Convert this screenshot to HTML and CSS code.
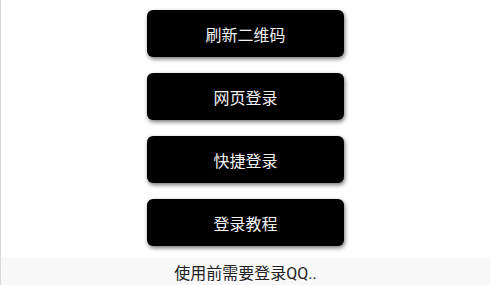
FILE: index.html
```html
<!DOCTYPE html>
<html lang="zh">

<head>
  <meta charset="UTF-8">
  <meta name="viewport" content="width=device-width, initial-scale=1.0">
  <title>QQ登录</title>
  <link rel="stylesheet" href="styles.css">
</head>

<body>
  <div class="menu">
    <div class="menu-button">刷新二维码</div>
    <div class="menu-button">网页登录</div>
    <div class="menu-button">快捷登录</div>
    <div class="menu-button">登录教程</div>
  </div>
  <div class="status-bar">使用前需要登录QQ..</div>
</body>

</html>
```

FILE: styles.css
```css
html,
body {
  margin: 0;
  height: 100%;
}

body {
  font-family: Roboto, "Noto Sans CJK SC", sans-serif;
  background-color: #ffffff;
  border-left: 1px solid #d8d8d8;
  box-sizing: border-box;
  display: flex;
  flex-direction: column;
  overflow: hidden;
}

.menu {
  height: 258px;
  display: flex;
  flex-direction: column;
  align-items: center;
  padding-top: 10px;
  gap: 16px;
  box-sizing: border-box;
}

.menu-button {
  width: 197px;
  height: 47px;
  flex-shrink: 0;
  background-color: #000;
  color: #f2f2f2;
  border-radius: 6px;
  box-shadow: 1px 2px 4px rgba(0, 0, 0, 0.55);
  display: flex;
  justify-content: center;
  align-items: center;
  font-size: 16px;
  cursor: pointer;
}

.status-bar {
  flex: 1;
  background-color: #f8f8f8;
  color: #222;
  font-size: 16px;
  display: flex;
  justify-content: center;
  align-items: center;
  padding-top: 1px;
}
```
